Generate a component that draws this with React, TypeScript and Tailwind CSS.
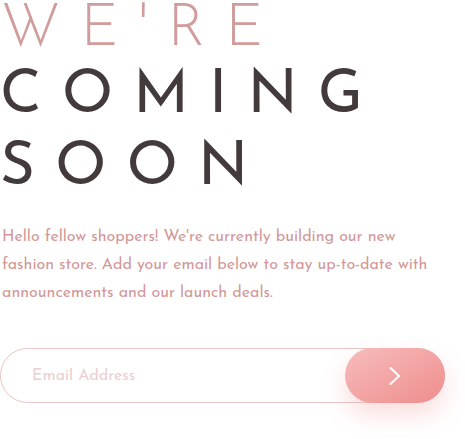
import React from 'react'

export default function App() {
  return (
    <div className="min-h-[439px] w-full bg-white font-['Josefin_Sans','Lato',sans-serif]">
      <h1 className="uppercase">
        <span className="ml-[1px] block text-[60px] leading-[60px] font-light tracking-[0.33em] text-[#d09c9c]">
          We&apos;re
        </span>
        <span className="mt-[1px] block text-[60px] leading-[72px] font-normal tracking-[0.335em] text-[#433a3b]">
          Coming
          <br />
          Soon
        </span>
      </h1>

      <p className="mt-[18px] w-[440px] pl-[2px] text-[16px] leading-[28px] font-normal text-[#d29898]">
        Hello fellow shoppers! We&apos;re currently building our new fashion store. Add your email below to
        stay up-to-date with announcements and our launch deals.
      </p>

      <form className="mt-[41px] flex h-[55px] w-[445px] items-center rounded-full border border-[#e8c6c6]">
        <input
          type="email"
          placeholder="Email Address"
          className="h-full flex-1 bg-transparent pl-[31px] text-[16px] text-[#a36a6a] outline-none placeholder:text-[#ead0d0]"
        />
        <button
          type="button"
          className="-my-px -mr-px flex h-[55px] w-[100px] items-center justify-center rounded-full bg-linear-to-br from-[#f7bcbc] to-[#ee8d8d] shadow-[0_12px_24px_rgba(238,142,142,0.3)]"
        >
          <svg width="12" height="18" viewBox="0 0 12 18" fill="none">
            <path d="M1.5 1 L10 9 L1.5 17" stroke="white" strokeWidth="2" strokeLinecap="round" strokeLinejoin="round" />
          </svg>
        </button>
      </form>
    </div>
  )
}
